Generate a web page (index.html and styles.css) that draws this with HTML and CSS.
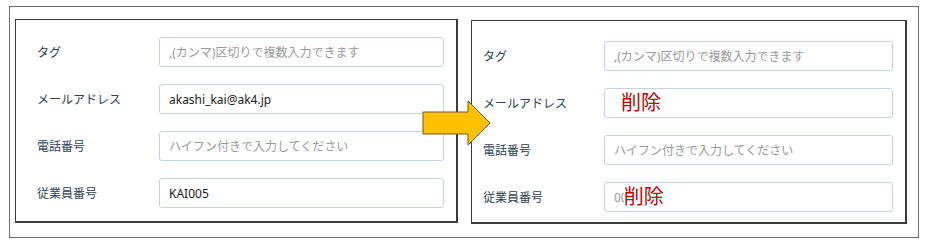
FILE: index.html
```html
<!DOCTYPE html>
<html lang="ja">

<head>
    <meta charset="UTF-8">
    <meta name="viewport" content="width=device-width, initial-scale=1.0">
    <title>項目の削除</title>
    <link rel="stylesheet" href="styles.css">
</head>

<body>
    <div class="frame">
        <!-- 変更前 -->
        <div class="panel panel-before">
            <div class="row">
                <span class="label">タグ</span>
                <div class="field"><span class="placeholder">,(カンマ)区切りで複数入力できます</span></div>
            </div>
            <div class="row">
                <span class="label">メールアドレス</span>
                <div class="field"><span class="value">akashi_kai@ak4.jp</span></div>
            </div>
            <div class="row">
                <span class="label">電話番号</span>
                <div class="field"><span class="placeholder">ハイフン付きで入力してください</span></div>
            </div>
            <div class="row">
                <span class="label">従業員番号</span>
                <div class="field"><span class="value">KAI005</span></div>
            </div>
        </div>

        <!-- 変更後 -->
        <div class="panel panel-after">
            <div class="row">
                <span class="label">タグ</span>
                <div class="field"><span class="placeholder">,(カンマ)区切りで複数入力できます</span></div>
            </div>
            <div class="row">
                <span class="label">メールアドレス</span>
                <div class="field"><span class="delete delete-first">削除</span></div>
            </div>
            <div class="row">
                <span class="label">電話番号</span>
                <div class="field"><span class="placeholder">ハイフン付きで入力してください</span></div>
            </div>
            <div class="row">
                <span class="label">従業員番号</span>
                <div class="field"><span class="ghost">00</span><span class="delete delete-over">削除</span></div>
            </div>
        </div>

        <svg class="arrow" width="70" height="46" viewBox="0 0 70 46">
            <polygon points="1,12 46,12 46,1 68,23 46,45 46,34 1,34" fill="#ffc000" stroke="#6b5a1e" stroke-width="1" />
        </svg>
    </div>
</body>

</html>
```

FILE: styles.css
```css
body {
    margin: 0;
    padding: 0;
    background-color: #fff;
    font-family: "Noto Sans", "Noto Sans CJK JP", sans-serif;
}

.frame {
    position: relative;
    width: 903px;
    height: 230px;
    margin: 6px 0 0 9px;
    border: 1px solid #6e6e6e;
    display: flex;
    align-items: flex-start;
    gap: 13px;
    padding: 0 0 0 5px;
}

.panel {
    border: 2px solid #3c3c3c;
    border-top-width: 1px;
    border-left-width: 1px;
    display: flex;
    flex-direction: column;
    gap: 17px;
}

.panel-before {
    margin-top: 12px;
    width: 407px;
    padding: 17px 12px 13px 21px;
}

.panel-after {
    margin-top: 13px;
    width: 410px;
    padding: 20px 12px 10px 11px;
}

.row {
    display: flex;
    align-items: center;
    height: 30px;
}

.label {
    font-size: 12px;
    color: #2f4256;
}

.panel-before .label {
    width: 122px;
}

.panel-after .label {
    width: 121px;
}

.field {
    flex: 1;
    height: 28px;
    border: 1px solid #c5d3df;
    border-radius: 3px;
    display: flex;
    align-items: center;
    padding-left: 9px;
    font-size: 12px;
    white-space: nowrap;
    overflow: hidden;
}

.placeholder {
    color: #9a9a9a;
}

.value {
    color: #222;
}

.ghost {
    color: #999;
}

.delete {
    color: #c00000;
    font-size: 20px;
    line-height: 24px;
    background-color: #fff;
}

.delete-first {
    margin-left: 7px;
}

.delete-over {
    margin-left: -4px;
}

.arrow {
    position: absolute;
    left: 412px;
    top: 93px;
}
```
